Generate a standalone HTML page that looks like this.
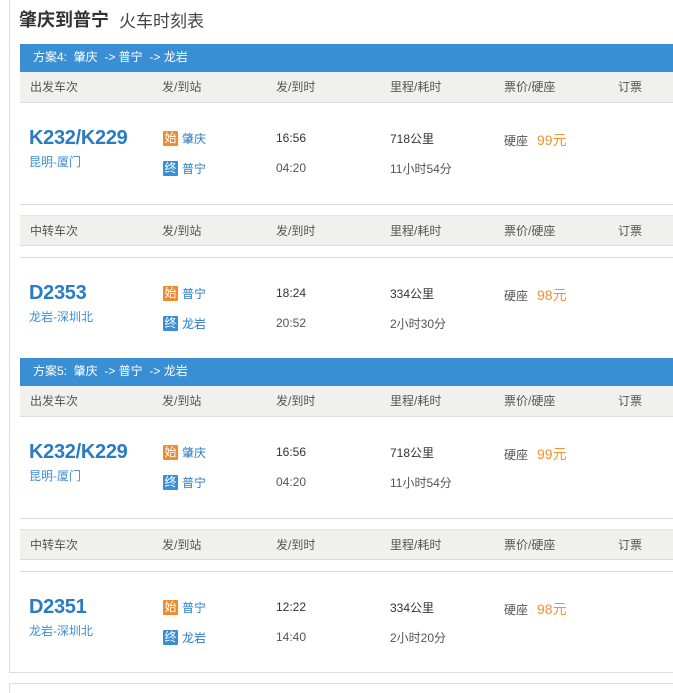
<!DOCTYPE html>
<html><head><meta charset="utf-8"><style>
*{margin:0;padding:0;box-sizing:border-box}
body{width:673px;height:685px;background:#fff;position:relative;overflow:hidden;font-family:"Liberation Sans","Noto Sans CJK SC",sans-serif;font-size:12px;color:#333}
.a{position:absolute;white-space:nowrap}
.box{position:absolute;left:9px;top:-2px;width:700px;height:675px;border:1px solid #ddd}
.box2{position:absolute;left:9px;top:683px;width:700px;height:10px;border-top:1px solid #ddd;border-left:1px solid #ddd}
.bar{position:absolute;left:20px;width:653px;height:28px;background:#3a8fd4;color:#fff;font-size:12px;line-height:27px;padding-left:13px}
.hd{position:absolute;left:20px;width:653px;height:31px;background:#f0f0ee;border-bottom:1px solid #ddd;color:#555}
.hd span{position:absolute;top:6px}
.ln{position:absolute;left:20px;width:653px;height:1px;background:#d8d8d8}
.tn{font-size:20px;font-weight:bold;color:#2a7bc3;letter-spacing:-0.3px}
.rt{color:#3a8fd4;font-size:12px}
.ic{position:absolute;width:15px;height:15px;color:#fff;font-size:12px;line-height:15px;text-align:center;border-radius:1px}
.o{background:#f08a2c}.b{background:#3a8fd4}
.st{color:#2a7bc3}
.pr{color:#f0922e;font-size:14px}
.gy{color:#555}
</style></head><body>
<div class="box"></div><div class="box2"></div>
<div class="a" style="left:19px;top:6px;font-size:18px;font-weight:bold;color:#333">肇庆到普宁</div>
<div class="a" style="left:119px;top:7px;font-size:17px;color:#444">火车时刻表</div>

<div class="bar" style="top:44px">方案4:&nbsp; 肇庆 &nbsp;-&gt; 普宁 &nbsp;-&gt; 龙岩</div>
<div class="hd" style="top:72px"><span style="left:10px">出发车次</span><span style="left:142px">发/到站</span><span style="left:256px">发/到时</span><span style="left:370px">里程/耗时</span><span style="left:484px">票价/硬座</span><span style="left:598px">订票</span></div>
<div class="a tn" style="left:29px;top:127px">K232/K229</div>
<div class="a rt" style="left:29px;top:153px">昆明-厦门</div>
<div class="ic o" style="left:163px;top:131px">始</div><div class="a st" style="left:182px;top:130px">肇庆</div>
<div class="ic b" style="left:163px;top:161px">终</div><div class="a st" style="left:182px;top:160px">普宁</div>
<div class="a" style="left:276px;top:131px">16:56</div><div class="a gy" style="left:276px;top:161px">04:20</div>
<div class="a" style="left:390px;top:130px">718公里</div><div class="a gy" style="left:390px;top:160px">11小时54分</div>
<div class="a gy" style="left:504px;top:132px">硬座</div><div class="a pr" style="left:537px;top:130px">99元</div>
<div class="ln" style="top:204px"></div>
<div class="hd" style="top:215px;border-top:1px solid #e4e4e4"><span style="left:10px">中转车次</span><span style="left:142px">发/到站</span><span style="left:256px">发/到时</span><span style="left:370px">里程/耗时</span><span style="left:484px">票价/硬座</span><span style="left:598px">订票</span></div>
<div class="ln" style="top:257px"></div>
<div class="a tn" style="left:29px;top:282px">D2353</div>
<div class="a rt" style="left:29px;top:308px">龙岩-深圳北</div>
<div class="ic o" style="left:163px;top:286px">始</div><div class="a st" style="left:182px;top:285px">普宁</div>
<div class="ic b" style="left:163px;top:316px">终</div><div class="a st" style="left:182px;top:315px">龙岩</div>
<div class="a" style="left:276px;top:286px">18:24</div><div class="a gy" style="left:276px;top:316px">20:52</div>
<div class="a" style="left:390px;top:285px">334公里</div><div class="a gy" style="left:390px;top:315px">2小时30分</div>
<div class="a gy" style="left:504px;top:287px">硬座</div><div class="a pr" style="left:537px;top:285px">98元</div>

<div class="bar" style="top:358px">方案5:&nbsp; 肇庆 &nbsp;-&gt; 普宁 &nbsp;-&gt; 龙岩</div>
<div class="hd" style="top:386px"><span style="left:10px">出发车次</span><span style="left:142px">发/到站</span><span style="left:256px">发/到时</span><span style="left:370px">里程/耗时</span><span style="left:484px">票价/硬座</span><span style="left:598px">订票</span></div>
<div class="a tn" style="left:29px;top:441px">K232/K229</div>
<div class="a rt" style="left:29px;top:467px">昆明-厦门</div>
<div class="ic o" style="left:163px;top:445px">始</div><div class="a st" style="left:182px;top:444px">肇庆</div>
<div class="ic b" style="left:163px;top:475px">终</div><div class="a st" style="left:182px;top:474px">普宁</div>
<div class="a" style="left:276px;top:445px">16:56</div><div class="a gy" style="left:276px;top:475px">04:20</div>
<div class="a" style="left:390px;top:444px">718公里</div><div class="a gy" style="left:390px;top:474px">11小时54分</div>
<div class="a gy" style="left:504px;top:446px">硬座</div><div class="a pr" style="left:537px;top:444px">99元</div>
<div class="ln" style="top:518px"></div>
<div class="hd" style="top:529px;border-top:1px solid #e4e4e4"><span style="left:10px">中转车次</span><span style="left:142px">发/到站</span><span style="left:256px">发/到时</span><span style="left:370px">里程/耗时</span><span style="left:484px">票价/硬座</span><span style="left:598px">订票</span></div>
<div class="ln" style="top:571px"></div>
<div class="a tn" style="left:29px;top:596px">D2351</div>
<div class="a rt" style="left:29px;top:622px">龙岩-深圳北</div>
<div class="ic o" style="left:163px;top:600px">始</div><div class="a st" style="left:182px;top:599px">普宁</div>
<div class="ic b" style="left:163px;top:630px">终</div><div class="a st" style="left:182px;top:629px">龙岩</div>
<div class="a" style="left:276px;top:600px">12:22</div><div class="a gy" style="left:276px;top:630px">14:40</div>
<div class="a" style="left:390px;top:599px">334公里</div><div class="a gy" style="left:390px;top:629px">2小时20分</div>
<div class="a gy" style="left:504px;top:601px">硬座</div><div class="a pr" style="left:537px;top:599px">98元</div>
</body></html>
